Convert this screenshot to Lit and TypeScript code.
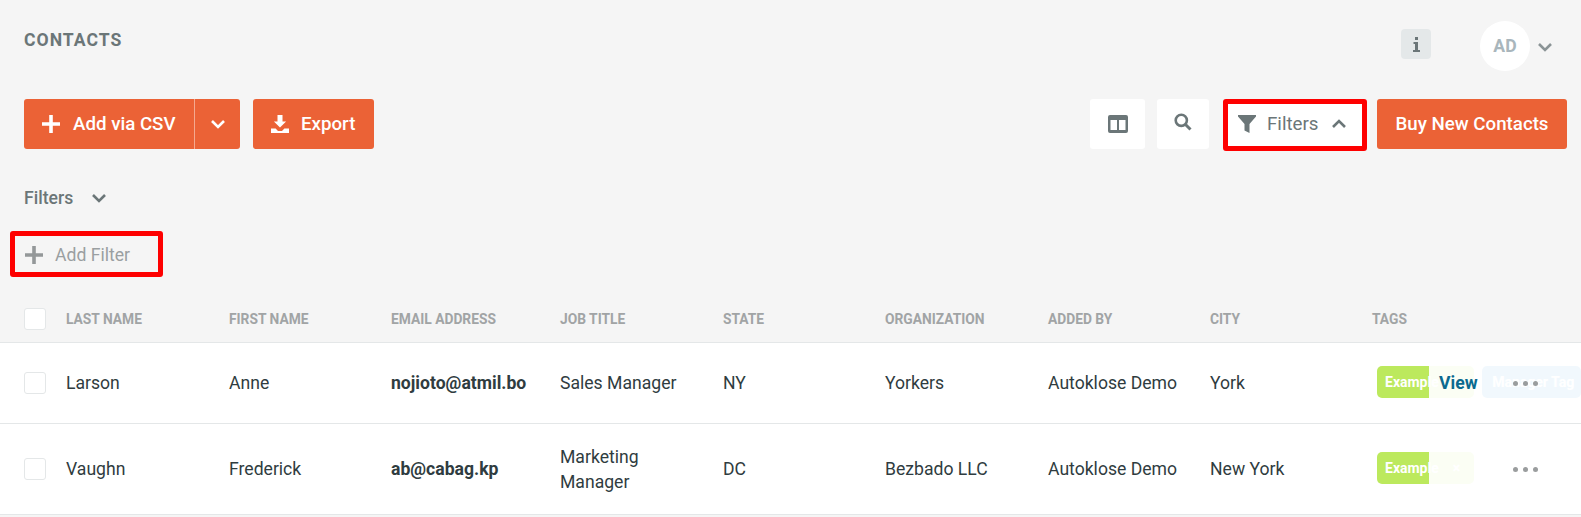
import { LitElement, html, css } from "lit";
import { customElement } from "lit/decorators.js";

const chevDown = (c: string) => html`<svg class=${c} viewBox="0 0 16 10" width="16" height="10"><path d="M2 2l6 6 6-6" fill="none" stroke="currentColor" stroke-width="2.6"/></svg>`;
const chevUp = (c: string) => html`<svg class=${c} viewBox="0 0 16 10" width="16" height="10"><path d="M2 8l6-6 6 6" fill="none" stroke="currentColor" stroke-width="2.6"/></svg>`;
const plus = html`<svg viewBox="0 0 18 18" width="18" height="18"><path d="M7.2 0h3.6v7.2H18v3.6h-7.2V18H7.2v-7.2H0V7.2h7.2z" fill="currentColor"/></svg>`;

const rows = [
  { last: "Larson", first: "Anne", email: "nojioto@atmil.bo", job: "Sales Manager", state: "NY", org: "Yorkers", by: "Autoklose Demo", city: "York", tags: ["Example", "Manager Tag"], view: true },
  { last: "Vaughn", first: "Frederick", email: "ab@cabag.kp", job: "Marketing Manager", state: "DC", org: "Bezbado LLC", by: "Autoklose Demo", city: "New York", tags: ["Example"], view: false },
];
const heads = ["LAST NAME", "FIRST NAME", "EMAIL ADDRESS", "JOB TITLE", "STATE", "ORGANIZATION", "ADDED BY", "CITY", "TAGS"];

@customElement("app-root")
export class AppRoot extends LitElement {
  static styles = css`
    :host { display: block; width: 100%; height: 517px; overflow: hidden; background: #f5f5f5; font-family: Roboto, sans-serif; color: #2f3c40; }
    * { box-sizing: border-box; }
    .top { display: flex; align-items: flex-start; height: 99px; padding: 21px 28px 0 24px; }
    h1 { margin: 9px 0 0; font-size: 17.6px; line-height: 21px; font-weight: 700; letter-spacing: 1px; color: #6b7678; flex: 1; }
    .info { width: 30px; height: 30px; margin: 8px 49px 0 0; border-radius: 4px; background: #e4e8e9; color: #6b7678; display: flex; align-items: center; justify-content: center; }
    .avatar { width: 50px; height: 50px; border-radius: 50%; background: #fff; color: #a9b6bc; font-weight: 700; font-size: 17.6px; display: flex; align-items: center; justify-content: center; }
    .avchev { color: #8b9496; margin: 21px 0 0 7px; }
    .toolbar { display: flex; align-items: flex-start; height: 52px; padding: 0 14px 0 24px; }
    .btn { height: 50px; border-radius: 3px; background: #eb6236; color: #fff; font-size: 18.72px; font-weight: 500; display: flex; align-items: center; }
    .add { width: 171px; padding-left: 18px; gap: 13px; border-right: 1px solid #f4a98f; border-radius: 3px 0 0 3px; }
    .caret { width: 45px; justify-content: center; border-radius: 0 3px 3px 0; margin-right: 13px; }
    .export { width: 121px; padding-left: 18px; gap: 12px; }
    .spacer { flex: 1; }
    .white { height: 50px; background: #fff; border-radius: 3px; color: #6b7678; display: flex; align-items: center; justify-content: center; }
    .cols { width: 55px; margin-right: 12px; }
    .search { width: 52px; margin-right: 14px; padding-bottom: 5px; }
    .ftoggle { width: 144px; height: 52px; border: 5px solid #fe0000; border-radius: 3px; background: #fff; color: #6b7678; display: flex; align-items: center; padding-left: 10px; font-size: 18.72px; margin-right: 10px; padding-bottom: 2px; }
    .ftoggle span { margin: 0 13px 0 11px; }
    .buy { width: 190px; justify-content: center; }
    .flabel { display: flex; align-items: center; margin: 35px 0 0 24px; height: 24px; font-size: 17.6px; font-weight: 500; color: #6b7678; gap: 18px; }
    .addf { width: 153px; height: 46px; margin: 21px 0 0 10px; border: 5px solid #fe0000; border-radius: 3px; display: flex; align-items: center; padding: 2px 0 0 10px; gap: 12px; font-size: 17.6px; color: #9a9fa1; }
    .addf svg { color: #949899; }
    .grid { display: grid; grid-template-columns: 66px 163px 162px 169px 163px 162px 163px 162px 162px 1fr; align-items: center; }
    .head { height: 66px; padding-top: 18px; border-bottom: 1px solid #e4e7e8; font-size: 13.8px; font-weight: 700; color: #a1a4a5; }
    .check { padding-left: 24px; }
    .box { width: 22px; height: 22px; background: #fff; border: 1px solid #e4e7e8; border-radius: 3px; }
    .row { position: relative; background: #fff; border-bottom: 1px solid #e4e7e8; font-size: 17.6px; line-height: 25px; height: 81px; overflow: hidden; }
    .row.tall { height: 91px; }
    .cell { padding-right: 30px; }
    .job { padding-top: 1px; }
    .nowrap { white-space: nowrap; padding-right: 0; }
    .email { font-weight: 700; }
    .tags { grid-column: 10; display: flex; gap: 8px; white-space: nowrap; padding-left: 5px; margin-bottom: 2px; }
    .chip { height: 32px; border-radius: 5px; background: #bce95d; color: #fff; font-size: 14px; font-weight: 700; display: flex; align-items: center; padding: 0 14px 0 8px; gap: 14px; flex: none; }
    .chip.blue { background: #379bde; width: 99px; padding: 0 0 0 10px; }
    .chip i { font-style: normal; }
    .over { position: absolute; left: 1429px; right: 0; top: 0; bottom: 0; background: rgba(255,255,255,.935); }
    .view { position: absolute; left: 10px; top: 28px; font-size: 17.6px; font-weight: 700; color: #0b6a8f; }
    .dots { position: absolute; left: 84px; top: calc(50% - 2.5px); display: flex; gap: 5px; }
    .dots b { width: 5px; height: 5px; border-radius: 50%; background: #9a9d9e; }
  `;

  render() {
    return html`
      <div class="top">
        <h1>CONTACTS</h1>
        <div class="info"><svg viewBox="0 0 9 16" width="9" height="16"><path d="M3 1h3v3H3zM1.500 6H6v8h2v2H1v-2h2V8H1.500z" fill="currentColor"/></svg></div>
        <div class="avatar">AD</div>
        ${chevDown("avchev")}
      </div>
      <div class="toolbar">
        <div class="btn add">${plus}<span>Add via CSV</span></div>
        <div class="btn caret">${chevDown("")}</div>
        <div class="btn export">
          <svg viewBox="0 0 18 18" width="18" height="18"><path d="M6.500 0h5v6.500h3.600L9 12.600 2.900 6.500h3.600zM0 13.500h4.600L7 16h4l2.400-2.500H18V18H0z" fill="currentColor"/></svg>
          <span>Export</span>
        </div>
        <div class="spacer"></div>
        <div class="white cols"><svg viewBox="0 0 20 18" width="20" height="18"><path fill-rule="evenodd" d="M2 0h16a2 2 0 0 1 2 2v14a2 2 0 0 1-2 2H2a2 2 0 0 1-2-2V2a2 2 0 0 1 2-2zM2.500 5v10h6.500V5zM11 5v10h6.500V5z" fill="currentColor"/></svg></div>
        <div class="white search"><svg viewBox="0 0 18 18" width="18" height="18"><circle cx="7.300" cy="7.300" r="5.600" fill="none" stroke="currentColor" stroke-width="2.600"/><path d="M11.500 11.500l5 5" stroke="currentColor" stroke-width="3" fill="none"/></svg></div>
        <div class="ftoggle">
          <svg viewBox="0 0 18 18" width="18" height="18"><path d="M0 0h18v1.500L11.500 9v9l-5-2.500V9L0 1.500z" fill="currentColor"/></svg>
          <span>Filters</span>
          ${chevUp("")}
        </div>
        <div class="btn buy">Buy New Contacts</div>
      </div>
      <div class="flabel"><span>Filters</span>${chevDown("")}</div>
      <div class="addf">${plus}<span>Add Filter</span></div>
      <div class="grid head">
        <div class="check"><div class="box"></div></div>
        ${heads.map((h) => html`<div>${h}</div>`)}
      </div>
      ${rows.map((r, i) => html`
        <div class="grid row ${i ? "tall" : ""}">
          <div class="check"><div class="box"></div></div>
          <div class="cell">${r.last}</div>
          <div class="cell">${r.first}</div>
          <div class="cell nowrap email">${r.email}</div>
          <div class="cell job">${r.job}</div>
          <div class="cell">${r.state}</div>
          <div class="cell">${r.org}</div>
          <div class="cell nowrap">${r.by}</div>
          <div class="cell">${r.city}</div>
          <div class="tags">${r.tags.map((t, j) => html`<div class="chip ${j ? "blue" : ""}"><span>${t}</span>${j ? "" : html`<i>×</i>`}</div>`)}</div>
          <div class="over">
            ${r.view ? html`<span class="view">View</span>` : ""}
            <div class="dots"><b></b><b></b><b></b></div>
          </div>
        </div>`)}
    `;
  }
}
